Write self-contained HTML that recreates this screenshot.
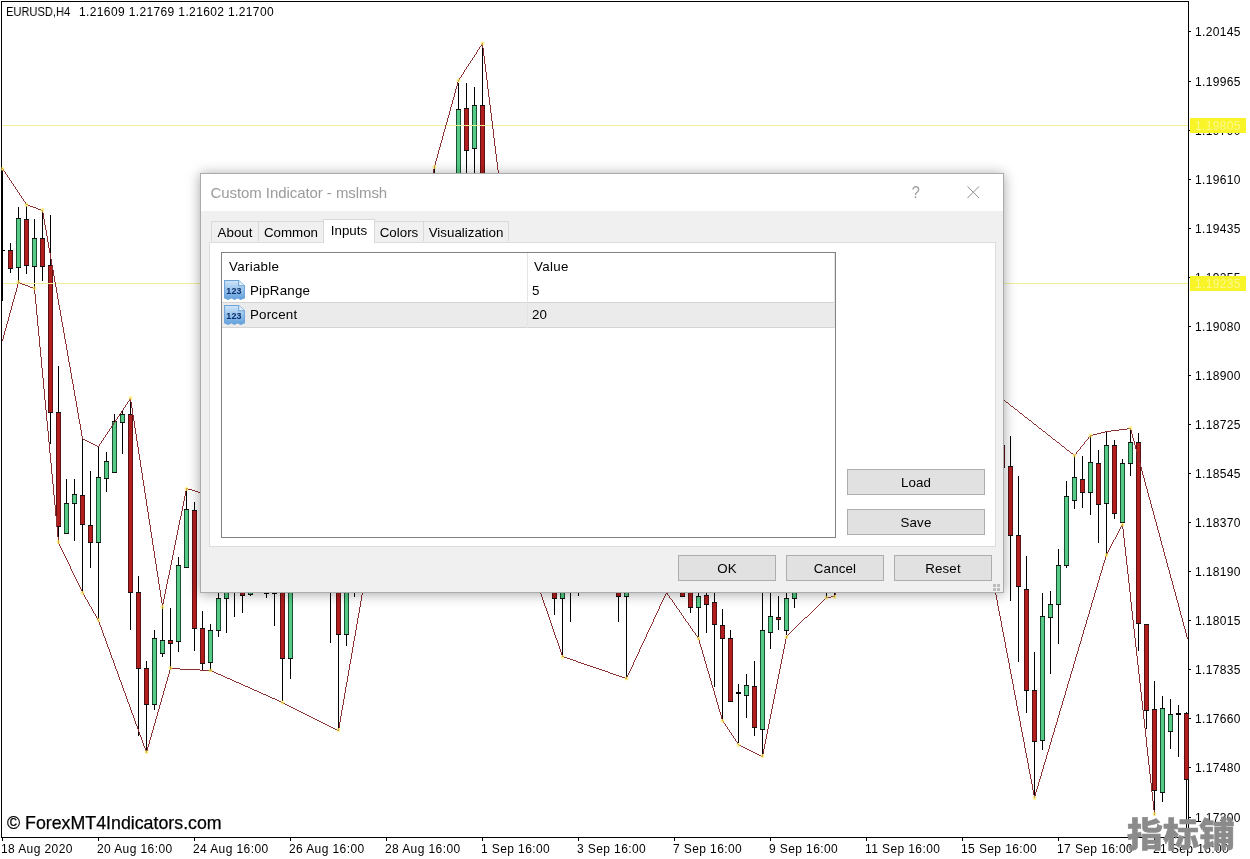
<!DOCTYPE html>
<html lang="en"><head><meta charset="utf-8"><title>EURUSD,H4 - Custom Indicator - mslmsh</title>
<style>
html,body{margin:0;padding:0;background:#fff;}
body{width:1250px;height:859px;position:relative;overflow:hidden;font-family:"Liberation Sans",sans-serif;color:#000;}
.chart{position:absolute;left:0;top:0;}
.ct,.pl,.dl,.wm,.dlg,.yb{will-change:transform;}
.ct{position:absolute;font-size:12px;line-height:14px;white-space:pre;letter-spacing:0.25px;}
.pl{position:absolute;left:1195px;width:52px;height:14px;font-size:12px;line-height:14px;letter-spacing:0.36px;white-space:pre;}
.yb{position:absolute;left:1190px;width:56px;height:15px;background:#f8f428;font-size:12px;line-height:15px;letter-spacing:0.36px;color:#fbf98c;white-space:pre;}
.yb span{position:absolute;left:5px;top:0.5px;}
.dl{position:absolute;top:842px;font-size:12px;line-height:14px;white-space:pre;letter-spacing:0.4px;}
.wm{position:absolute;left:7px;top:812.5px;-webkit-text-stroke:0.25px #000;font-size:17.8px;line-height:20px;white-space:pre;}
.cjk{position:absolute;left:1127px;top:813px;font-family:"Liberation Sans","Noto Sans CJK SC",sans-serif;font-weight:900;font-size:36px;line-height:46px;color:#8b8b8b;white-space:pre;-webkit-text-stroke:0.5px #8b8b8b;transform:scaleY(0.94);transform-origin:0 50%;}
.dlg{position:absolute;left:200px;top:173px;width:802px;height:418px;border:1px solid #ababab;background:#f0f0f0;box-shadow:0 1px 12px rgba(0,0,0,0.36);font-size:13.33px;}
.dlg .tb{position:absolute;left:0;top:0;width:802px;height:37px;background:#fff;}
.dlg .tt{position:absolute;left:9.5px;top:10px;font-size:15px;line-height:18px;color:#9b9b9b;white-space:pre;letter-spacing:-0.07px;}
.dlg .q{position:absolute;left:710px;top:10px;font-size:17px;line-height:18px;color:#9b9b9b;transform:scaleX(0.85);}
.dlg .x{position:absolute;left:766px;top:12px;}
.tab{position:absolute;top:47px;height:20px;border:1px solid #d9d9d9;border-bottom:none;background:#f0f0f0;box-sizing:border-box;text-align:center;line-height:21px;white-space:pre;}
.tab.sel{top:45px;height:24px;background:#fff;line-height:22px;z-index:2;}
.page{position:absolute;left:8px;top:68px;width:785px;height:303px;border:1px solid #dcdcdc;background:#fff;}
.list{position:absolute;left:11px;top:9px;width:613px;height:284px;border:1px solid #828282;background:#fff;}
.list .hd{position:absolute;top:0;height:25px;line-height:28px;letter-spacing:0.3px;}
.row{position:absolute;left:0;width:612px;height:24px;line-height:25px;letter-spacing:0.2px;}
.row.sel{background:#ebebeb;border-top:1px solid #d4d4d4;border-bottom:1px solid #d4d4d4;height:24px;line-height:24px;}
.vd{position:absolute;left:305px;top:0;width:1px;height:75px;background:#e5e5e5;}
.vd2{position:absolute;left:612px;top:0;width:1px;height:75px;background:#e5e5e5;}
.btn{position:absolute;height:24px;border:1px solid #adadad;background:#e1e1e1;text-align:center;line-height:25px;letter-spacing:0.15px;box-sizing:content-box;}
.ico{position:absolute;left:1px;}
</style></head>
<body>
<svg class="chart" width="1250" height="859" viewBox="0 0 1250 859"><g shape-rendering="crispEdges"><rect x="1" y="1" width="1188" height="1" fill="#000"/><rect x="1" y="1" width="1" height="837" fill="#000"/><rect x="1188" y="1" width="1" height="837" fill="#000"/><rect x="1" y="837" width="1188" height="1" fill="#000"/><rect x="2" y="170" width="1" height="131" fill="#000"/><rect x="2" y="250" width="3" height="1" fill="#000"/><rect x="10" y="243" width="1" height="30" fill="#000"/><rect x="8" y="250" width="5" height="19" fill="#5c1212"/><rect x="8" y="250" width="5" height="1" fill="#111"/><rect x="8" y="268" width="5" height="1" fill="#111"/><rect x="9" y="251" width="3" height="17" fill="#b01e1e"/><rect x="18" y="207" width="1" height="75" fill="#000"/><rect x="16" y="218" width="5" height="50" fill="#1a4f31"/><rect x="16" y="218" width="5" height="1" fill="#111"/><rect x="16" y="267" width="5" height="1" fill="#111"/><rect x="17" y="219" width="3" height="48" fill="#55cb87"/><rect x="26" y="206" width="1" height="68" fill="#000"/><rect x="24" y="219" width="5" height="47" fill="#5c1212"/><rect x="24" y="219" width="5" height="1" fill="#111"/><rect x="24" y="265" width="5" height="1" fill="#111"/><rect x="25" y="220" width="3" height="45" fill="#b01e1e"/><rect x="34" y="219" width="1" height="69" fill="#000"/><rect x="32" y="238" width="5" height="29" fill="#1a4f31"/><rect x="32" y="238" width="5" height="1" fill="#111"/><rect x="32" y="266" width="5" height="1" fill="#111"/><rect x="33" y="239" width="3" height="27" fill="#55cb87"/><rect x="42" y="212" width="1" height="69" fill="#000"/><rect x="40" y="238" width="5" height="29" fill="#5c1212"/><rect x="40" y="238" width="5" height="1" fill="#111"/><rect x="40" y="266" width="5" height="1" fill="#111"/><rect x="41" y="239" width="3" height="27" fill="#b01e1e"/><rect x="50" y="215" width="1" height="229" fill="#000"/><rect x="48" y="265" width="5" height="148" fill="#5c1212"/><rect x="48" y="265" width="5" height="1" fill="#111"/><rect x="48" y="412" width="5" height="1" fill="#111"/><rect x="49" y="266" width="3" height="146" fill="#b01e1e"/><rect x="58" y="366" width="1" height="171" fill="#000"/><rect x="56" y="412" width="5" height="115" fill="#5c1212"/><rect x="56" y="412" width="5" height="1" fill="#111"/><rect x="56" y="526" width="5" height="1" fill="#111"/><rect x="57" y="413" width="3" height="113" fill="#b01e1e"/><rect x="66" y="479" width="1" height="54" fill="#000"/><rect x="64" y="503" width="5" height="31" fill="#1a4f31"/><rect x="64" y="503" width="5" height="1" fill="#111"/><rect x="64" y="533" width="5" height="1" fill="#111"/><rect x="65" y="504" width="3" height="29" fill="#55cb87"/><rect x="74" y="479" width="1" height="62" fill="#000"/><rect x="72" y="494" width="5" height="10" fill="#1a4f31"/><rect x="72" y="494" width="5" height="1" fill="#111"/><rect x="72" y="503" width="5" height="1" fill="#111"/><rect x="73" y="495" width="3" height="8" fill="#55cb87"/><rect x="82" y="438" width="1" height="153" fill="#000"/><rect x="80" y="495" width="5" height="30" fill="#5c1212"/><rect x="80" y="495" width="5" height="1" fill="#111"/><rect x="80" y="524" width="5" height="1" fill="#111"/><rect x="81" y="496" width="3" height="28" fill="#b01e1e"/><rect x="90" y="471" width="1" height="97" fill="#000"/><rect x="88" y="525" width="5" height="18" fill="#5c1212"/><rect x="88" y="525" width="5" height="1" fill="#111"/><rect x="88" y="542" width="5" height="1" fill="#111"/><rect x="89" y="526" width="3" height="16" fill="#b01e1e"/><rect x="98" y="447" width="1" height="172" fill="#000"/><rect x="96" y="477" width="5" height="66" fill="#1a4f31"/><rect x="96" y="477" width="5" height="1" fill="#111"/><rect x="96" y="542" width="5" height="1" fill="#111"/><rect x="97" y="478" width="3" height="64" fill="#55cb87"/><rect x="106" y="452" width="1" height="40" fill="#000"/><rect x="104" y="461" width="5" height="18" fill="#1a4f31"/><rect x="104" y="461" width="5" height="1" fill="#111"/><rect x="104" y="478" width="5" height="1" fill="#111"/><rect x="105" y="462" width="3" height="16" fill="#55cb87"/><rect x="114" y="414" width="1" height="58" fill="#000"/><rect x="112" y="421" width="5" height="52" fill="#1a4f31"/><rect x="112" y="421" width="5" height="1" fill="#111"/><rect x="112" y="472" width="5" height="1" fill="#111"/><rect x="113" y="422" width="3" height="50" fill="#55cb87"/><rect x="122" y="411" width="1" height="43" fill="#000"/><rect x="120" y="414" width="5" height="9" fill="#1a4f31"/><rect x="120" y="414" width="5" height="1" fill="#111"/><rect x="120" y="422" width="5" height="1" fill="#111"/><rect x="121" y="415" width="3" height="7" fill="#55cb87"/><rect x="130" y="398" width="1" height="232" fill="#000"/><rect x="128" y="414" width="5" height="179" fill="#5c1212"/><rect x="128" y="414" width="5" height="1" fill="#111"/><rect x="128" y="592" width="5" height="1" fill="#111"/><rect x="129" y="415" width="3" height="177" fill="#b01e1e"/><rect x="138" y="576" width="1" height="160" fill="#000"/><rect x="136" y="592" width="5" height="77" fill="#5c1212"/><rect x="136" y="592" width="5" height="1" fill="#111"/><rect x="136" y="668" width="5" height="1" fill="#111"/><rect x="137" y="593" width="3" height="75" fill="#b01e1e"/><rect x="146" y="661" width="1" height="90" fill="#000"/><rect x="144" y="668" width="5" height="37" fill="#5c1212"/><rect x="144" y="668" width="5" height="1" fill="#111"/><rect x="144" y="704" width="5" height="1" fill="#111"/><rect x="145" y="669" width="3" height="35" fill="#b01e1e"/><rect x="154" y="630" width="1" height="80" fill="#000"/><rect x="152" y="638" width="5" height="67" fill="#1a4f31"/><rect x="152" y="638" width="5" height="1" fill="#111"/><rect x="152" y="704" width="5" height="1" fill="#111"/><rect x="153" y="639" width="3" height="65" fill="#55cb87"/><rect x="162" y="607" width="1" height="50" fill="#000"/><rect x="160" y="640" width="5" height="14" fill="#1a4f31"/><rect x="160" y="640" width="5" height="1" fill="#111"/><rect x="160" y="653" width="5" height="1" fill="#111"/><rect x="161" y="641" width="3" height="12" fill="#55cb87"/><rect x="170" y="608" width="1" height="60" fill="#000"/><rect x="168" y="640" width="5" height="4" fill="#5c1212"/><rect x="168" y="640" width="5" height="1" fill="#111"/><rect x="168" y="643" width="5" height="1" fill="#111"/><rect x="169" y="641" width="3" height="2" fill="#b01e1e"/><rect x="178" y="557" width="1" height="95" fill="#000"/><rect x="176" y="565" width="5" height="77" fill="#1a4f31"/><rect x="176" y="565" width="5" height="1" fill="#111"/><rect x="176" y="641" width="5" height="1" fill="#111"/><rect x="177" y="566" width="3" height="75" fill="#55cb87"/><rect x="186" y="489" width="1" height="79" fill="#000"/><rect x="184" y="509" width="5" height="59" fill="#1a4f31"/><rect x="184" y="509" width="5" height="1" fill="#111"/><rect x="184" y="567" width="5" height="1" fill="#111"/><rect x="185" y="510" width="3" height="57" fill="#55cb87"/><rect x="194" y="502" width="1" height="149" fill="#000"/><rect x="192" y="510" width="5" height="119" fill="#5c1212"/><rect x="192" y="510" width="5" height="1" fill="#111"/><rect x="192" y="628" width="5" height="1" fill="#111"/><rect x="193" y="511" width="3" height="117" fill="#b01e1e"/><rect x="202" y="611" width="1" height="59" fill="#000"/><rect x="200" y="628" width="5" height="36" fill="#5c1212"/><rect x="200" y="628" width="5" height="1" fill="#111"/><rect x="200" y="663" width="5" height="1" fill="#111"/><rect x="201" y="629" width="3" height="34" fill="#b01e1e"/><rect x="210" y="624" width="1" height="46" fill="#000"/><rect x="208" y="630" width="5" height="33" fill="#1a4f31"/><rect x="208" y="630" width="5" height="1" fill="#111"/><rect x="208" y="662" width="5" height="1" fill="#111"/><rect x="209" y="631" width="3" height="31" fill="#55cb87"/><rect x="218" y="570" width="1" height="67" fill="#000"/><rect x="216" y="598" width="5" height="33" fill="#1a4f31"/><rect x="216" y="598" width="5" height="1" fill="#111"/><rect x="216" y="630" width="5" height="1" fill="#111"/><rect x="217" y="599" width="3" height="31" fill="#55cb87"/><rect x="226" y="550" width="1" height="83" fill="#000"/><rect x="224" y="560" width="5" height="39" fill="#1a4f31"/><rect x="224" y="560" width="5" height="1" fill="#111"/><rect x="224" y="598" width="5" height="1" fill="#111"/><rect x="225" y="561" width="3" height="37" fill="#55cb87"/><rect x="234" y="560" width="1" height="57" fill="#000"/><rect x="232" y="570" width="5" height="11" fill="#5c1212"/><rect x="232" y="570" width="5" height="1" fill="#111"/><rect x="232" y="580" width="5" height="1" fill="#111"/><rect x="233" y="571" width="3" height="9" fill="#b01e1e"/><rect x="242" y="570" width="1" height="43" fill="#000"/><rect x="240" y="580" width="5" height="16" fill="#5c1212"/><rect x="240" y="580" width="5" height="1" fill="#111"/><rect x="240" y="595" width="5" height="1" fill="#111"/><rect x="241" y="581" width="3" height="14" fill="#b01e1e"/><rect x="250" y="575" width="1" height="21" fill="#000"/><rect x="248" y="580" width="5" height="15" fill="#1a4f31"/><rect x="248" y="580" width="5" height="1" fill="#111"/><rect x="248" y="594" width="5" height="1" fill="#111"/><rect x="249" y="581" width="3" height="13" fill="#55cb87"/><rect x="266" y="580" width="1" height="18" fill="#000"/><rect x="264" y="592" width="5" height="2" fill="#000"/><rect x="274" y="580" width="1" height="46" fill="#000"/><rect x="272" y="592" width="5" height="2" fill="#000"/><rect x="282" y="570" width="1" height="131" fill="#000"/><rect x="280" y="580" width="5" height="79" fill="#5c1212"/><rect x="280" y="580" width="5" height="1" fill="#111"/><rect x="280" y="658" width="5" height="1" fill="#111"/><rect x="281" y="581" width="3" height="77" fill="#b01e1e"/><rect x="290" y="570" width="1" height="109" fill="#000"/><rect x="288" y="580" width="5" height="79" fill="#1a4f31"/><rect x="288" y="580" width="5" height="1" fill="#111"/><rect x="288" y="658" width="5" height="1" fill="#111"/><rect x="289" y="581" width="3" height="77" fill="#55cb87"/><rect x="330" y="570" width="1" height="73" fill="#000"/><rect x="328" y="580" width="5" height="6" fill="#5c1212"/><rect x="328" y="580" width="5" height="1" fill="#111"/><rect x="328" y="585" width="5" height="1" fill="#111"/><rect x="329" y="581" width="3" height="4" fill="#b01e1e"/><rect x="338" y="570" width="1" height="158" fill="#000"/><rect x="336" y="580" width="5" height="55" fill="#5c1212"/><rect x="336" y="580" width="5" height="1" fill="#111"/><rect x="336" y="634" width="5" height="1" fill="#111"/><rect x="337" y="581" width="3" height="53" fill="#b01e1e"/><rect x="346" y="570" width="1" height="76" fill="#000"/><rect x="344" y="580" width="5" height="55" fill="#1a4f31"/><rect x="344" y="580" width="5" height="1" fill="#111"/><rect x="344" y="634" width="5" height="1" fill="#111"/><rect x="345" y="581" width="3" height="53" fill="#55cb87"/><rect x="354" y="570" width="1" height="27" fill="#000"/><rect x="352" y="580" width="5" height="6" fill="#1a4f31"/><rect x="352" y="580" width="5" height="1" fill="#111"/><rect x="352" y="585" width="5" height="1" fill="#111"/><rect x="353" y="581" width="3" height="4" fill="#55cb87"/><rect x="434" y="168" width="1" height="32" fill="#000"/><rect x="432" y="180" width="5" height="11" fill="#1a4f31"/><rect x="432" y="180" width="5" height="1" fill="#111"/><rect x="432" y="190" width="5" height="1" fill="#111"/><rect x="433" y="181" width="3" height="9" fill="#55cb87"/><rect x="458" y="83" width="1" height="107" fill="#000"/><rect x="456" y="109" width="5" height="72" fill="#1a4f31"/><rect x="456" y="109" width="5" height="1" fill="#111"/><rect x="456" y="180" width="5" height="1" fill="#111"/><rect x="457" y="110" width="3" height="70" fill="#55cb87"/><rect x="466" y="83" width="1" height="107" fill="#000"/><rect x="464" y="108" width="5" height="43" fill="#5c1212"/><rect x="464" y="108" width="5" height="1" fill="#111"/><rect x="464" y="150" width="5" height="1" fill="#111"/><rect x="465" y="109" width="3" height="41" fill="#b01e1e"/><rect x="474" y="87" width="1" height="103" fill="#000"/><rect x="472" y="105" width="5" height="44" fill="#1a4f31"/><rect x="472" y="105" width="5" height="1" fill="#111"/><rect x="472" y="148" width="5" height="1" fill="#111"/><rect x="473" y="106" width="3" height="42" fill="#55cb87"/><rect x="482" y="46" width="1" height="149" fill="#000"/><rect x="480" y="105" width="5" height="86" fill="#5c1212"/><rect x="480" y="105" width="5" height="1" fill="#111"/><rect x="480" y="190" width="5" height="1" fill="#111"/><rect x="481" y="106" width="3" height="84" fill="#b01e1e"/><rect x="554" y="570" width="1" height="45" fill="#000"/><rect x="552" y="580" width="5" height="19" fill="#5c1212"/><rect x="552" y="580" width="5" height="1" fill="#111"/><rect x="552" y="598" width="5" height="1" fill="#111"/><rect x="553" y="581" width="3" height="17" fill="#b01e1e"/><rect x="562" y="570" width="1" height="85" fill="#000"/><rect x="560" y="580" width="5" height="19" fill="#1a4f31"/><rect x="560" y="580" width="5" height="1" fill="#111"/><rect x="560" y="598" width="5" height="1" fill="#111"/><rect x="561" y="581" width="3" height="17" fill="#55cb87"/><rect x="570" y="570" width="1" height="52" fill="#000"/><rect x="568" y="575" width="5" height="6" fill="#5c1212"/><rect x="568" y="575" width="5" height="1" fill="#111"/><rect x="568" y="580" width="5" height="1" fill="#111"/><rect x="569" y="576" width="3" height="4" fill="#b01e1e"/><rect x="578" y="570" width="1" height="26" fill="#000"/><rect x="576" y="575" width="5" height="6" fill="#5c1212"/><rect x="576" y="575" width="5" height="1" fill="#111"/><rect x="576" y="580" width="5" height="1" fill="#111"/><rect x="577" y="576" width="3" height="4" fill="#b01e1e"/><rect x="618" y="570" width="1" height="52" fill="#000"/><rect x="616" y="580" width="5" height="17" fill="#5c1212"/><rect x="616" y="580" width="5" height="1" fill="#111"/><rect x="616" y="596" width="5" height="1" fill="#111"/><rect x="617" y="581" width="3" height="15" fill="#b01e1e"/><rect x="626" y="570" width="1" height="107" fill="#000"/><rect x="624" y="580" width="5" height="17" fill="#1a4f31"/><rect x="624" y="580" width="5" height="1" fill="#111"/><rect x="624" y="596" width="5" height="1" fill="#111"/><rect x="625" y="581" width="3" height="15" fill="#55cb87"/><rect x="682" y="570" width="1" height="26" fill="#000"/><rect x="680" y="580" width="5" height="17" fill="#5c1212"/><rect x="680" y="580" width="5" height="1" fill="#111"/><rect x="680" y="596" width="5" height="1" fill="#111"/><rect x="681" y="581" width="3" height="15" fill="#b01e1e"/><rect x="690" y="570" width="1" height="43" fill="#000"/><rect x="688" y="580" width="5" height="28" fill="#5c1212"/><rect x="688" y="580" width="5" height="1" fill="#111"/><rect x="688" y="607" width="5" height="1" fill="#111"/><rect x="689" y="581" width="3" height="26" fill="#b01e1e"/><rect x="698" y="570" width="1" height="67" fill="#000"/><rect x="696" y="596" width="5" height="12" fill="#1a4f31"/><rect x="696" y="596" width="5" height="1" fill="#111"/><rect x="696" y="607" width="5" height="1" fill="#111"/><rect x="697" y="597" width="3" height="10" fill="#55cb87"/><rect x="706" y="570" width="1" height="63" fill="#000"/><rect x="704" y="595" width="5" height="10" fill="#5c1212"/><rect x="704" y="595" width="5" height="1" fill="#111"/><rect x="704" y="604" width="5" height="1" fill="#111"/><rect x="705" y="596" width="3" height="8" fill="#b01e1e"/><rect x="714" y="570" width="1" height="117" fill="#000"/><rect x="712" y="602" width="5" height="23" fill="#5c1212"/><rect x="712" y="602" width="5" height="1" fill="#111"/><rect x="712" y="624" width="5" height="1" fill="#111"/><rect x="713" y="603" width="3" height="21" fill="#b01e1e"/><rect x="722" y="609" width="1" height="110" fill="#000"/><rect x="720" y="625" width="5" height="14" fill="#5c1212"/><rect x="720" y="625" width="5" height="1" fill="#111"/><rect x="720" y="638" width="5" height="1" fill="#111"/><rect x="721" y="626" width="3" height="12" fill="#b01e1e"/><rect x="730" y="630" width="1" height="71" fill="#000"/><rect x="728" y="638" width="5" height="64" fill="#5c1212"/><rect x="728" y="638" width="5" height="1" fill="#111"/><rect x="728" y="701" width="5" height="1" fill="#111"/><rect x="729" y="639" width="3" height="62" fill="#b01e1e"/><rect x="738" y="684" width="1" height="59" fill="#000"/><rect x="736" y="692" width="5" height="2" fill="#000"/><rect x="746" y="674" width="1" height="44" fill="#000"/><rect x="744" y="685" width="5" height="11" fill="#1a4f31"/><rect x="744" y="685" width="5" height="1" fill="#111"/><rect x="744" y="695" width="5" height="1" fill="#111"/><rect x="745" y="686" width="3" height="9" fill="#55cb87"/><rect x="754" y="661" width="1" height="75" fill="#000"/><rect x="752" y="686" width="5" height="42" fill="#5c1212"/><rect x="752" y="686" width="5" height="1" fill="#111"/><rect x="752" y="727" width="5" height="1" fill="#111"/><rect x="753" y="687" width="3" height="40" fill="#b01e1e"/><rect x="762" y="570" width="1" height="184" fill="#000"/><rect x="760" y="630" width="5" height="100" fill="#1a4f31"/><rect x="760" y="630" width="5" height="1" fill="#111"/><rect x="760" y="729" width="5" height="1" fill="#111"/><rect x="761" y="631" width="3" height="98" fill="#55cb87"/><rect x="770" y="570" width="1" height="79" fill="#000"/><rect x="768" y="616" width="5" height="17" fill="#1a4f31"/><rect x="768" y="616" width="5" height="1" fill="#111"/><rect x="768" y="632" width="5" height="1" fill="#111"/><rect x="769" y="617" width="3" height="15" fill="#55cb87"/><rect x="778" y="596" width="1" height="34" fill="#000"/><rect x="776" y="617" width="5" height="3" fill="#5c1212"/><rect x="776" y="617" width="5" height="1" fill="#111"/><rect x="776" y="619" width="5" height="1" fill="#111"/><rect x="777" y="618" width="3" height="1" fill="#b01e1e"/><rect x="786" y="593" width="1" height="42" fill="#000"/><rect x="784" y="598" width="5" height="33" fill="#1a4f31"/><rect x="784" y="598" width="5" height="1" fill="#111"/><rect x="784" y="630" width="5" height="1" fill="#111"/><rect x="785" y="599" width="3" height="31" fill="#55cb87"/><rect x="794" y="570" width="1" height="38" fill="#000"/><rect x="792" y="580" width="5" height="19" fill="#1a4f31"/><rect x="792" y="580" width="5" height="1" fill="#111"/><rect x="792" y="598" width="5" height="1" fill="#111"/><rect x="793" y="581" width="3" height="17" fill="#55cb87"/><rect x="826" y="570" width="1" height="27" fill="#000"/><rect x="824" y="575" width="5" height="6" fill="#1a4f31"/><rect x="824" y="575" width="5" height="1" fill="#111"/><rect x="824" y="580" width="5" height="1" fill="#111"/><rect x="825" y="576" width="3" height="4" fill="#55cb87"/><rect x="834" y="570" width="1" height="27" fill="#000"/><rect x="832" y="575" width="5" height="6" fill="#1a4f31"/><rect x="832" y="575" width="5" height="1" fill="#111"/><rect x="832" y="580" width="5" height="1" fill="#111"/><rect x="833" y="576" width="3" height="4" fill="#55cb87"/><rect x="1002" y="440" width="1" height="30" fill="#000"/><rect x="1000" y="445" width="5" height="23" fill="#5c1212"/><rect x="1000" y="445" width="5" height="1" fill="#111"/><rect x="1000" y="467" width="5" height="1" fill="#111"/><rect x="1001" y="446" width="3" height="21" fill="#b01e1e"/><rect x="1010" y="436" width="1" height="165" fill="#000"/><rect x="1008" y="466" width="5" height="70" fill="#5c1212"/><rect x="1008" y="466" width="5" height="1" fill="#111"/><rect x="1008" y="535" width="5" height="1" fill="#111"/><rect x="1009" y="467" width="3" height="68" fill="#b01e1e"/><rect x="1018" y="476" width="1" height="186" fill="#000"/><rect x="1016" y="535" width="5" height="52" fill="#5c1212"/><rect x="1016" y="535" width="5" height="1" fill="#111"/><rect x="1016" y="586" width="5" height="1" fill="#111"/><rect x="1017" y="536" width="3" height="50" fill="#b01e1e"/><rect x="1026" y="556" width="1" height="157" fill="#000"/><rect x="1024" y="589" width="5" height="102" fill="#5c1212"/><rect x="1024" y="589" width="5" height="1" fill="#111"/><rect x="1024" y="690" width="5" height="1" fill="#111"/><rect x="1025" y="590" width="3" height="100" fill="#b01e1e"/><rect x="1034" y="652" width="1" height="144" fill="#000"/><rect x="1032" y="690" width="5" height="52" fill="#5c1212"/><rect x="1032" y="690" width="5" height="1" fill="#111"/><rect x="1032" y="741" width="5" height="1" fill="#111"/><rect x="1033" y="691" width="3" height="50" fill="#b01e1e"/><rect x="1042" y="593" width="1" height="157" fill="#000"/><rect x="1040" y="616" width="5" height="125" fill="#1a4f31"/><rect x="1040" y="616" width="5" height="1" fill="#111"/><rect x="1040" y="740" width="5" height="1" fill="#111"/><rect x="1041" y="617" width="3" height="123" fill="#55cb87"/><rect x="1050" y="591" width="1" height="83" fill="#000"/><rect x="1048" y="604" width="5" height="14" fill="#1a4f31"/><rect x="1048" y="604" width="5" height="1" fill="#111"/><rect x="1048" y="617" width="5" height="1" fill="#111"/><rect x="1049" y="605" width="3" height="12" fill="#55cb87"/><rect x="1058" y="549" width="1" height="95" fill="#000"/><rect x="1056" y="565" width="5" height="40" fill="#1a4f31"/><rect x="1056" y="565" width="5" height="1" fill="#111"/><rect x="1056" y="604" width="5" height="1" fill="#111"/><rect x="1057" y="566" width="3" height="38" fill="#55cb87"/><rect x="1066" y="481" width="1" height="87" fill="#000"/><rect x="1064" y="496" width="5" height="70" fill="#1a4f31"/><rect x="1064" y="496" width="5" height="1" fill="#111"/><rect x="1064" y="565" width="5" height="1" fill="#111"/><rect x="1065" y="497" width="3" height="68" fill="#55cb87"/><rect x="1074" y="455" width="1" height="54" fill="#000"/><rect x="1072" y="477" width="5" height="24" fill="#1a4f31"/><rect x="1072" y="477" width="5" height="1" fill="#111"/><rect x="1072" y="500" width="5" height="1" fill="#111"/><rect x="1073" y="478" width="3" height="22" fill="#55cb87"/><rect x="1082" y="456" width="1" height="52" fill="#000"/><rect x="1080" y="479" width="5" height="14" fill="#5c1212"/><rect x="1080" y="479" width="5" height="1" fill="#111"/><rect x="1080" y="492" width="5" height="1" fill="#111"/><rect x="1081" y="480" width="3" height="12" fill="#b01e1e"/><rect x="1090" y="436" width="1" height="79" fill="#000"/><rect x="1088" y="462" width="5" height="31" fill="#1a4f31"/><rect x="1088" y="462" width="5" height="1" fill="#111"/><rect x="1088" y="492" width="5" height="1" fill="#111"/><rect x="1089" y="463" width="3" height="29" fill="#55cb87"/><rect x="1098" y="450" width="1" height="93" fill="#000"/><rect x="1096" y="463" width="5" height="42" fill="#5c1212"/><rect x="1096" y="463" width="5" height="1" fill="#111"/><rect x="1096" y="504" width="5" height="1" fill="#111"/><rect x="1097" y="464" width="3" height="40" fill="#b01e1e"/><rect x="1106" y="432" width="1" height="122" fill="#000"/><rect x="1104" y="445" width="5" height="59" fill="#1a4f31"/><rect x="1104" y="445" width="5" height="1" fill="#111"/><rect x="1104" y="503" width="5" height="1" fill="#111"/><rect x="1105" y="446" width="3" height="57" fill="#55cb87"/><rect x="1114" y="440" width="1" height="79" fill="#000"/><rect x="1112" y="445" width="5" height="69" fill="#5c1212"/><rect x="1112" y="445" width="5" height="1" fill="#111"/><rect x="1112" y="513" width="5" height="1" fill="#111"/><rect x="1113" y="446" width="3" height="67" fill="#b01e1e"/><rect x="1122" y="459" width="1" height="64" fill="#000"/><rect x="1120" y="463" width="5" height="60" fill="#1a4f31"/><rect x="1120" y="463" width="5" height="1" fill="#111"/><rect x="1120" y="522" width="5" height="1" fill="#111"/><rect x="1121" y="464" width="3" height="58" fill="#55cb87"/><rect x="1130" y="429" width="1" height="47" fill="#000"/><rect x="1128" y="442" width="5" height="22" fill="#1a4f31"/><rect x="1128" y="442" width="5" height="1" fill="#111"/><rect x="1128" y="463" width="5" height="1" fill="#111"/><rect x="1129" y="443" width="3" height="20" fill="#55cb87"/><rect x="1138" y="433" width="1" height="218" fill="#000"/><rect x="1136" y="442" width="5" height="182" fill="#5c1212"/><rect x="1136" y="442" width="5" height="1" fill="#111"/><rect x="1136" y="623" width="5" height="1" fill="#111"/><rect x="1137" y="443" width="3" height="180" fill="#b01e1e"/><rect x="1146" y="624" width="1" height="105" fill="#000"/><rect x="1144" y="624" width="5" height="87" fill="#5c1212"/><rect x="1144" y="624" width="5" height="1" fill="#111"/><rect x="1144" y="710" width="5" height="1" fill="#111"/><rect x="1145" y="625" width="3" height="85" fill="#b01e1e"/><rect x="1154" y="681" width="1" height="130" fill="#000"/><rect x="1152" y="709" width="5" height="82" fill="#5c1212"/><rect x="1152" y="709" width="5" height="1" fill="#111"/><rect x="1152" y="790" width="5" height="1" fill="#111"/><rect x="1153" y="710" width="3" height="80" fill="#b01e1e"/><rect x="1162" y="696" width="1" height="106" fill="#000"/><rect x="1160" y="708" width="5" height="85" fill="#1a4f31"/><rect x="1160" y="708" width="5" height="1" fill="#111"/><rect x="1160" y="792" width="5" height="1" fill="#111"/><rect x="1161" y="709" width="3" height="83" fill="#55cb87"/><rect x="1170" y="699" width="1" height="50" fill="#000"/><rect x="1168" y="714" width="5" height="18" fill="#1a4f31"/><rect x="1168" y="714" width="5" height="1" fill="#111"/><rect x="1168" y="731" width="5" height="1" fill="#111"/><rect x="1169" y="715" width="3" height="16" fill="#55cb87"/><rect x="1178" y="705" width="1" height="52" fill="#000"/><rect x="1176" y="713" width="5" height="2" fill="#000"/><rect x="1186" y="712" width="1" height="123" fill="#000"/><rect x="1184" y="713" width="5" height="67" fill="#5c1212"/><rect x="1184" y="713" width="5" height="1" fill="#111"/><rect x="1184" y="779" width="5" height="1" fill="#111"/><rect x="1185" y="714" width="3" height="65" fill="#b01e1e"/><rect x="1189" y="31" width="2" height="1" fill="#000"/><rect x="1189" y="81" width="2" height="1" fill="#000"/><rect x="1189" y="130" width="2" height="1" fill="#000"/><rect x="1189" y="179" width="2" height="1" fill="#000"/><rect x="1189" y="228" width="2" height="1" fill="#000"/><rect x="1189" y="277" width="2" height="1" fill="#000"/><rect x="1189" y="326" width="2" height="1" fill="#000"/><rect x="1189" y="375" width="2" height="1" fill="#000"/><rect x="1189" y="424" width="2" height="1" fill="#000"/><rect x="1189" y="473" width="2" height="1" fill="#000"/><rect x="1189" y="522" width="2" height="1" fill="#000"/><rect x="1189" y="571" width="2" height="1" fill="#000"/><rect x="1189" y="620" width="2" height="1" fill="#000"/><rect x="1189" y="669" width="2" height="1" fill="#000"/><rect x="1189" y="718" width="2" height="1" fill="#000"/><rect x="1189" y="767" width="2" height="1" fill="#000"/><rect x="1189" y="817" width="2" height="1" fill="#000"/><rect x="2" y="838" width="1" height="3" fill="#000"/><rect x="98" y="838" width="1" height="3" fill="#000"/><rect x="194" y="838" width="1" height="3" fill="#000"/><rect x="290" y="838" width="1" height="3" fill="#000"/><rect x="386" y="838" width="1" height="3" fill="#000"/><rect x="482" y="838" width="1" height="3" fill="#000"/><rect x="578" y="838" width="1" height="3" fill="#000"/><rect x="674" y="838" width="1" height="3" fill="#000"/><rect x="770" y="838" width="1" height="3" fill="#000"/><rect x="866" y="838" width="1" height="3" fill="#000"/><rect x="962" y="838" width="1" height="3" fill="#000"/><rect x="1058" y="838" width="1" height="3" fill="#000"/><rect x="1154" y="838" width="1" height="3" fill="#000"/></g><g shape-rendering="crispEdges"><rect x="3" y="125" width="1185" height="1" fill="#f2ee98"/><rect x="3" y="283" width="1185" height="1" fill="#f2ee98"/></g><path d="M2.5 168v1M3.5 169v2M4.5 171v1M5.5 172v2M6.5 174v1M7.5 175v2M8.5 177v1M9.5 178v2M10.5 180v1M11.5 181v2M12.5 183v1M13.5 184v2M14.5 186v1M15.5 187v2M16.5 189v1M17.5 190v2M18.5 192v1M19.5 193v2M20.5 195v1M21.5 196v2M22.5 198v1M23.5 199v2M24.5 201v1M25.5 202v2M26.5 204v1M26 204.5h2M28 205.5h2M30 206.5h3M33 207.5h3M36 208.5h2M38 209.5h3M41 210.5h2M42.5 210v3M43.5 213v6M44.5 219v6M45.5 225v5M46.5 230v6M47.5 236v6M48.5 242v6M49.5 248v5M50.5 253v6M51.5 259v6M52.5 265v5M53.5 270v6M54.5 276v6M55.5 282v5M56.5 287v6M57.5 293v6M58.5 299v6M59.5 305v5M60.5 310v6M61.5 316v6M62.5 322v5M63.5 327v6M64.5 333v6M65.5 339v5M66.5 344v6M67.5 350v6M68.5 356v6M69.5 362v5M70.5 367v6M71.5 373v6M72.5 379v5M73.5 384v6M74.5 390v6M75.5 396v5M76.5 401v6M77.5 407v6M78.5 413v6M79.5 419v5M80.5 424v6M81.5 430v6M82.5 436v3M82 438.5h1M83 439.5h2M85 440.5h2M87 441.5h2M89 442.5h2M91 443.5h2M93 444.5h2M95 445.5h2M97 446.5h2M130.5 398v1M129.5 399v2M128.5 401v1M127.5 402v2M126.5 404v1M125.5 405v2M124.5 407v1M123.5 408v2M122.5 410v1M121.5 411v2M120.5 413v1M119.5 414v2M118.5 416v1M117.5 417v2M116.5 419v1M115.5 420v2M114.5 422v1M113.5 423v2M112.5 425v1M111.5 426v2M110.5 428v1M109.5 429v2M108.5 431v1M107.5 432v2M106.5 434v1M105.5 435v2M104.5 437v1M103.5 438v2M102.5 440v1M101.5 441v2M100.5 443v1M99.5 444v2M98.5 446v1M130.5 398v4M131.5 402v6M132.5 408v7M133.5 415v6M134.5 421v7M135.5 428v6M136.5 434v7M137.5 441v6M138.5 447v7M139.5 454v6M140.5 460v7M141.5 467v6M142.5 473v7M143.5 480v6M144.5 486v7M145.5 493v6M146.5 499v7M147.5 506v6M148.5 512v7M149.5 519v6M150.5 525v7M151.5 532v6M152.5 538v7M153.5 545v6M154.5 551v7M155.5 558v6M156.5 564v7M157.5 571v6M158.5 577v7M159.5 584v6M160.5 590v7M161.5 597v6M162.5 603v4M186.5 488v3M185.5 491v5M184.5 496v5M183.5 501v5M182.5 506v5M181.5 511v5M180.5 516v4M179.5 520v5M178.5 525v5M177.5 530v5M176.5 535v5M175.5 540v5M174.5 545v5M173.5 550v5M172.5 555v5M171.5 560v5M170.5 565v5M169.5 570v5M168.5 575v4M167.5 579v5M166.5 584v5M165.5 589v5M164.5 594v5M163.5 599v5M162.5 604v3M186 488.5h2M188 489.5h4M192 490.5h3M195 491.5h3M198 492.5h4M202 493.5h3M205 494.5h3M208 495.5h4M212 496.5h3M215 497.5h4M219 498.5h3M222 499.5h3M225 500.5h4M229 501.5h3M232 502.5h3M235 503.5h4M239 504.5h2M18.5 282v2M17.5 284v4M16.5 288v4M15.5 292v3M14.5 295v4M13.5 299v3M12.5 302v4M11.5 306v4M10.5 310v3M9.5 313v4M8.5 317v4M7.5 321v3M6.5 324v4M5.5 328v3M4.5 331v4M3.5 335v4M2.5 339v2M18 282.5h2M20 283.5h2M22 284.5h3M25 285.5h3M28 286.5h2M30 287.5h3M33 288.5h2M34.5 288v6M35.5 294v10M36.5 304v11M37.5 315v11M38.5 326v10M39.5 336v11M40.5 347v10M41.5 357v11M42.5 368v10M43.5 378v11M44.5 389v11M45.5 400v10M46.5 410v11M47.5 421v10M48.5 431v11M49.5 442v11M50.5 453v10M51.5 463v11M52.5 474v10M53.5 484v11M54.5 495v10M55.5 505v11M56.5 516v11M57.5 527v10M58.5 537v6M58.5 542v2M59.5 544v2M60.5 546v2M61.5 548v2M62.5 550v2M63.5 552v2M64.5 554v2M65.5 556v2M66.5 558v2M67.5 560v2M68.5 562v2M69.5 564v2M70.5 566v3M71.5 569v2M72.5 571v2M73.5 573v2M74.5 575v2M75.5 577v2M76.5 579v2M77.5 581v2M78.5 583v2M79.5 585v2M80.5 587v2M81.5 589v2M82.5 591v2M82.5 592v1M83.5 593v2M84.5 595v2M85.5 597v2M86.5 599v1M87.5 600v2M88.5 602v2M89.5 604v2M90.5 606v1M91.5 607v2M92.5 609v2M93.5 611v2M94.5 613v1M95.5 614v2M96.5 616v2M97.5 618v2M98.5 620v1M98.5 620v2M99.5 622v3M100.5 625v2M101.5 627v3M102.5 630v3M103.5 633v3M104.5 636v2M105.5 638v3M106.5 641v3M107.5 644v3M108.5 647v2M109.5 649v3M110.5 652v3M111.5 655v3M112.5 658v2M113.5 660v3M114.5 663v3M115.5 666v3M116.5 669v2M117.5 671v3M118.5 674v3M119.5 677v3M120.5 680v2M121.5 682v3M122.5 685v3M123.5 688v3M124.5 691v2M125.5 693v3M126.5 696v3M127.5 699v3M128.5 702v2M129.5 704v3M130.5 707v3M131.5 710v3M132.5 713v2M133.5 715v3M134.5 718v3M135.5 721v3M136.5 724v2M137.5 726v3M138.5 729v3M139.5 732v3M140.5 735v2M141.5 737v3M142.5 740v3M143.5 743v3M144.5 746v2M145.5 748v3M146.5 751v2M170.5 668v2M169.5 670v4M168.5 674v3M167.5 677v4M166.5 681v3M165.5 684v4M164.5 688v3M163.5 691v4M162.5 695v3M161.5 698v4M160.5 702v3M159.5 705v4M158.5 709v3M157.5 712v4M156.5 716v3M155.5 719v4M154.5 723v3M153.5 726v4M152.5 730v3M151.5 733v4M150.5 737v3M149.5 740v4M148.5 744v3M147.5 747v4M146.5 751v2M170 668.5h10M180 669.5h20M200 670.5h11M210 670.5h2M212 671.5h2M214 672.5h2M216 673.5h2M218 674.5h3M221 675.5h2M223 676.5h2M225 677.5h2M227 678.5h3M230 679.5h2M232 680.5h2M234 681.5h2M236 682.5h3M239 683.5h2M241 684.5h2M243 685.5h2M245 686.5h3M248 687.5h2M250 688.5h2M252 689.5h2M254 690.5h3M257 691.5h2M259 692.5h2M261 693.5h2M263 694.5h3M266 695.5h2M268 696.5h2M270 697.5h2M272 698.5h3M275 699.5h2M277 700.5h2M279 701.5h2M281 702.5h2M282 702.5h1M283 703.5h2M285 704.5h2M287 705.5h2M289 706.5h2M291 707.5h2M293 708.5h2M295 709.5h2M297 710.5h2M299 711.5h2M301 712.5h2M303 713.5h2M305 714.5h2M307 715.5h2M309 716.5h2M311 717.5h2M313 718.5h2M315 719.5h2M317 720.5h2M319 721.5h2M321 722.5h2M323 723.5h2M325 724.5h2M327 725.5h2M329 726.5h2M331 727.5h2M333 728.5h2M335 729.5h2M337 730.5h2M362.5 592v3M361.5 595v6M360.5 601v6M359.5 607v6M358.5 613v5M357.5 618v6M356.5 624v6M355.5 630v6M354.5 636v5M353.5 641v6M352.5 647v6M351.5 653v6M350.5 659v5M349.5 664v6M348.5 670v6M347.5 676v6M346.5 682v5M345.5 687v6M344.5 693v6M343.5 699v6M342.5 705v5M341.5 710v6M340.5 716v6M339.5 722v6M338.5 728v3M364.5 580v4M363.5 584v6M362.5 590v3M434.5 166v3M433.5 169v4M432.5 173v4M431.5 177v4M430.5 181v2M458.5 80v2M457.5 82v4M456.5 86v3M455.5 89v4M454.5 93v4M453.5 97v3M452.5 100v4M451.5 104v3M450.5 107v4M449.5 111v4M448.5 115v3M447.5 118v4M446.5 122v3M445.5 125v4M444.5 129v3M443.5 132v4M442.5 136v4M441.5 140v3M440.5 143v4M439.5 147v3M438.5 150v4M437.5 154v4M436.5 158v3M435.5 161v4M434.5 165v2M482.5 43v1M481.5 44v2M480.5 46v1M479.5 47v2M478.5 49v1M477.5 50v2M476.5 52v2M475.5 54v1M474.5 55v2M473.5 57v1M472.5 58v2M471.5 60v1M470.5 61v2M469.5 63v1M468.5 64v2M467.5 66v1M466.5 67v2M465.5 69v1M464.5 70v2M463.5 72v2M462.5 74v1M461.5 75v2M460.5 77v1M459.5 78v2M458.5 80v1M482.5 43v5M483.5 48v8M484.5 56v8M485.5 64v8M486.5 72v8M487.5 80v9M488.5 89v8M489.5 97v8M490.5 105v8M491.5 113v8M492.5 121v8M493.5 129v9M494.5 138v8M495.5 146v8M496.5 154v8M497.5 162v8M498.5 170v5M498.5 174v4M499.5 178v8M500.5 186v5M535.5 580v2M536.5 582v2M537.5 584v2M538.5 586v3M539.5 589v2M540.5 591v2M540.5 592v2M541.5 594v3M542.5 597v3M543.5 600v3M544.5 603v3M545.5 606v2M546.5 608v3M547.5 611v3M548.5 614v3M549.5 617v3M550.5 620v3M551.5 623v3M552.5 626v3M553.5 629v3M554.5 632v3M555.5 635v3M556.5 638v2M557.5 640v3M558.5 643v3M559.5 646v3M560.5 649v3M561.5 652v3M562.5 655v2M562 656.5h2M564 657.5h3M567 658.5h3M570 659.5h3M573 660.5h3M576 661.5h2M578 662.5h3M581 663.5h3M584 664.5h3M587 665.5h3M590 666.5h3M593 667.5h3M596 668.5h3M599 669.5h3M602 670.5h3M605 671.5h3M608 672.5h2M610 673.5h3M613 674.5h3M616 675.5h3M619 676.5h3M622 677.5h3M625 678.5h2M666.5 592v2M665.5 594v2M664.5 596v2M663.5 598v2M662.5 600v2M661.5 602v2M660.5 604v2M659.5 606v3M658.5 609v2M657.5 611v2M656.5 613v2M655.5 615v2M654.5 617v2M653.5 619v3M652.5 622v2M651.5 624v2M650.5 626v2M649.5 628v2M648.5 630v2M647.5 632v2M646.5 634v3M645.5 637v2M644.5 639v2M643.5 641v2M642.5 643v2M641.5 645v2M640.5 647v2M639.5 649v3M638.5 652v2M637.5 654v2M636.5 656v2M635.5 658v2M634.5 660v2M633.5 662v3M632.5 665v2M631.5 667v2M630.5 669v2M629.5 671v2M628.5 673v2M627.5 675v2M626.5 677v2M670.5 584v2M669.5 586v2M668.5 588v2M667.5 590v2M666.5 592v1M662.5 584v1M663.5 585v2M664.5 587v2M665.5 589v2M666.5 591v2M666.5 592v1M667.5 593v2M668.5 595v1M669.5 596v2M670.5 598v1M671.5 599v1M672.5 600v2M673.5 602v1M674.5 603v2M675.5 605v1M676.5 606v2M677.5 608v1M678.5 609v1M679.5 610v2M680.5 612v1M681.5 613v2M682.5 615v1M683.5 616v2M684.5 618v1M685.5 619v2M686.5 621v1M687.5 622v1M688.5 623v2M689.5 625v1M690.5 626v2M691.5 628v1M692.5 629v2M693.5 631v1M694.5 632v1M695.5 633v2M696.5 635v1M697.5 636v2M698.5 638v1M698.5 638v2M699.5 640v4M700.5 644v3M701.5 647v3M702.5 650v4M703.5 654v3M704.5 657v4M705.5 661v3M706.5 664v4M707.5 668v3M708.5 671v3M709.5 674v4M710.5 678v3M711.5 681v4M712.5 685v3M713.5 688v3M714.5 691v4M715.5 695v3M716.5 698v4M717.5 702v3M718.5 705v4M719.5 709v3M720.5 712v3M721.5 715v4M722.5 719v2M722.5 720v1M723.5 721v2M724.5 723v1M725.5 724v2M726.5 726v1M727.5 727v2M728.5 729v1M729.5 730v2M730.5 732v1M731.5 733v2M732.5 735v1M733.5 736v2M734.5 738v1M735.5 739v2M736.5 741v1M737.5 742v2M738.5 744v1M738 744.5h1M739 745.5h2M741 746.5h2M743 747.5h2M745 748.5h2M747 749.5h2M749 750.5h2M751 751.5h2M753 752.5h2M755 753.5h2M757 754.5h2M759 755.5h2M761 756.5h2M786.5 636v3M785.5 639v5M784.5 644v5M783.5 649v5M782.5 654v5M781.5 659v5M780.5 664v5M779.5 669v5M778.5 674v5M777.5 679v5M776.5 684v5M775.5 689v5M774.5 694v5M773.5 699v5M772.5 704v5M771.5 709v5M770.5 714v5M769.5 719v5M768.5 724v5M767.5 729v5M766.5 734v5M765.5 739v5M764.5 744v5M763.5 749v5M762.5 754v3M786 636.5h1M787 635.5h1M788 634.5h1M789 633.5h1M790 632.5h1M791 631.5h1M792 630.5h1M793 629.5h1M794 628.5h1M795 627.5h1M796 626.5h1M797 625.5h1M798 624.5h1M799 623.5h1M800 622.5h1M801 621.5h1M802 620.5h1M803 619.5h1M804 618.5h1M805 617.5h2M807 616.5h1M808 615.5h1M809 614.5h1M810 613.5h1M811 612.5h1M812 611.5h1M813 610.5h1M814 609.5h1M815 608.5h1M816 607.5h1M817 606.5h1M818 605.5h1M819 604.5h1M820 603.5h1M821 602.5h1M822 601.5h1M823 600.5h1M824 599.5h1M825 598.5h1M826 597.5h1M826 597.5h5M831 596.5h4M836.5 588v3M835.5 591v4M834.5 595v2M990.5 566v3M991.5 569v5M992.5 574v5M993.5 579v6M994.5 585v5M995.5 590v3M995.5 592v3M996.5 595v5M997.5 600v6M998.5 606v5M999.5 611v5M1000.5 616v5M1001.5 621v6M1002.5 627v5M1003.5 632v5M1004.5 637v5M1005.5 642v6M1006.5 648v5M1007.5 653v5M1008.5 658v5M1009.5 663v6M1010.5 669v5M1011.5 674v5M1012.5 679v5M1013.5 684v6M1014.5 690v5M1015.5 695v5M1016.5 700v6M1017.5 706v5M1018.5 711v5M1019.5 716v5M1020.5 721v6M1021.5 727v5M1022.5 732v5M1023.5 737v5M1024.5 742v6M1025.5 748v5M1026.5 753v5M1027.5 758v5M1028.5 763v6M1029.5 769v5M1030.5 774v5M1031.5 779v5M1032.5 784v6M1033.5 790v5M1034.5 795v3M1106.5 554v2M1105.5 556v4M1104.5 560v3M1103.5 563v3M1102.5 566v4M1101.5 570v3M1100.5 573v3M1099.5 576v4M1098.5 580v3M1097.5 583v4M1096.5 587v3M1095.5 590v3M1094.5 593v4M1093.5 597v3M1092.5 600v3M1091.5 603v4M1090.5 607v3M1089.5 610v4M1088.5 614v3M1087.5 617v3M1086.5 620v4M1085.5 624v3M1084.5 627v3M1083.5 630v4M1082.5 634v3M1081.5 637v4M1080.5 641v3M1079.5 644v3M1078.5 647v4M1077.5 651v3M1076.5 654v3M1075.5 657v4M1074.5 661v3M1073.5 664v4M1072.5 668v3M1071.5 671v3M1070.5 674v4M1069.5 678v3M1068.5 681v3M1067.5 684v4M1066.5 688v3M1065.5 691v4M1064.5 695v3M1063.5 698v3M1062.5 701v4M1061.5 705v3M1060.5 708v3M1059.5 711v4M1058.5 715v3M1057.5 718v4M1056.5 722v3M1055.5 725v3M1054.5 728v4M1053.5 732v3M1052.5 735v3M1051.5 738v4M1050.5 742v3M1049.5 745v4M1048.5 749v3M1047.5 752v3M1046.5 755v4M1045.5 759v3M1044.5 762v3M1043.5 765v4M1042.5 769v3M1041.5 772v4M1040.5 776v3M1039.5 779v3M1038.5 782v4M1037.5 786v3M1036.5 789v3M1035.5 792v4M1034.5 796v2M1122.5 524v1M1121.5 525v2M1120.5 527v2M1119.5 529v2M1118.5 531v2M1117.5 533v2M1116.5 535v2M1115.5 537v2M1114.5 539v1M1113.5 540v2M1112.5 542v2M1111.5 544v2M1110.5 546v2M1109.5 548v2M1108.5 550v2M1107.5 552v2M1106.5 554v1M1122.5 524v5M1123.5 529v9M1124.5 538v9M1125.5 547v9M1126.5 556v9M1127.5 565v9M1128.5 574v9M1129.5 583v9M1130.5 592v10M1131.5 602v9M1132.5 611v9M1133.5 620v9M1134.5 629v9M1135.5 638v9M1136.5 647v9M1137.5 656v9M1138.5 665v9M1139.5 674v9M1140.5 683v9M1141.5 692v9M1142.5 701v9M1143.5 710v9M1144.5 719v9M1145.5 728v9M1146.5 737v10M1147.5 747v9M1148.5 756v9M1149.5 765v9M1150.5 774v9M1151.5 783v9M1152.5 792v9M1153.5 801v9M1154.5 810v5M990 388.5h1M991 389.5h1M992 390.5h1M993 391.5h2M995 392.5h1M996 393.5h1M997 394.5h1M998 395.5h1M999 396.5h1M1000 397.5h2M1002 398.5h1M1003 399.5h1M1004 400.5h1M1004 400.5h1M1005 401.5h1M1006 402.5h2M1008 403.5h1M1009 404.5h1M1010 405.5h1M1011 406.5h2M1013 407.5h1M1014 408.5h1M1015 409.5h2M1017 410.5h1M1018 411.5h1M1019 412.5h1M1020 413.5h2M1022 414.5h1M1023 415.5h1M1024 416.5h1M1025 417.5h2M1027 418.5h1M1028 419.5h1M1029 420.5h2M1031 421.5h1M1032 422.5h1M1033 423.5h1M1034 424.5h2M1036 425.5h1M1037 426.5h1M1038 427.5h1M1039 428.5h2M1041 429.5h1M1042 430.5h1M1043 431.5h2M1045 432.5h1M1046 433.5h1M1047 434.5h1M1048 435.5h2M1050 436.5h1M1051 437.5h1M1052 438.5h1M1053 439.5h2M1055 440.5h1M1056 441.5h1M1057 442.5h2M1059 443.5h1M1060 444.5h1M1061 445.5h1M1062 446.5h2M1064 447.5h1M1065 448.5h1M1066 449.5h1M1067 450.5h2M1069 451.5h1M1070 452.5h1M1071 453.5h2M1073 454.5h1M1074 455.5h1M1090.5 435v1M1089.5 436v1M1088.5 437v2M1087.5 439v1M1086.5 440v1M1085.5 441v1M1084.5 442v2M1083.5 444v1M1082.5 445v1M1081.5 446v1M1080.5 447v2M1079.5 449v1M1078.5 450v1M1077.5 451v1M1076.5 452v2M1075.5 454v1M1074.5 455v1M1090 435.5h3M1093 434.5h4M1097 433.5h4M1101 432.5h4M1105 431.5h2M1106 431.5h5M1111 430.5h8M1119 429.5h8M1127 428.5h4M1130.5 428v2M1131.5 430v4M1132.5 434v4M1133.5 438v3M1134.5 441v4M1135.5 445v4M1136.5 449v3M1137.5 452v4M1138.5 456v4M1139.5 460v3M1140.5 463v4M1141.5 467v4M1142.5 471v4M1143.5 475v3M1144.5 478v4M1145.5 482v4M1146.5 486v3M1147.5 489v4M1148.5 493v4M1149.5 497v3M1150.5 500v4M1151.5 504v4M1152.5 508v3M1153.5 511v4M1154.5 515v4M1155.5 519v3M1156.5 522v4M1157.5 526v4M1158.5 530v3M1159.5 533v4M1160.5 537v4M1161.5 541v4M1162.5 545v3M1163.5 548v4M1164.5 552v4M1165.5 556v3M1166.5 559v4M1167.5 563v4M1168.5 567v3M1169.5 570v4M1170.5 574v4M1171.5 578v3M1172.5 581v4M1173.5 585v4M1174.5 589v3M1175.5 592v4M1176.5 596v4M1177.5 600v3M1178.5 603v4M1179.5 607v4M1180.5 611v4M1181.5 615v3M1182.5 618v4M1183.5 622v4M1184.5 626v3M1185.5 629v4M1186.5 633v4M1187.5 637v2" fill="none" stroke="#8a3030" stroke-width="1" shape-rendering="crispEdges"/><circle cx="2.5" cy="169" r="1.9" fill="#ffe84a" opacity="0.62"/><circle cx="26.5" cy="205" r="1.9" fill="#ffe84a" opacity="0.62"/><circle cx="42.5" cy="210" r="1.9" fill="#ffe84a" opacity="0.62"/><circle cx="130.5" cy="398" r="1.9" fill="#ffe84a" opacity="0.62"/><circle cx="186.5" cy="489" r="1.9" fill="#ffe84a" opacity="0.62"/><circle cx="18.5" cy="282" r="1.9" fill="#ffe84a" opacity="0.62"/><circle cx="34.5" cy="288" r="1.9" fill="#ffe84a" opacity="0.62"/><circle cx="58.5" cy="542" r="1.9" fill="#ffe84a" opacity="0.62"/><circle cx="82.5" cy="593" r="1.9" fill="#ffe84a" opacity="0.62"/><circle cx="98.5" cy="620" r="1.9" fill="#ffe84a" opacity="0.62"/><circle cx="146.5" cy="752" r="1.9" fill="#ffe84a" opacity="0.62"/><circle cx="170.5" cy="668" r="1.9" fill="#ffe84a" opacity="0.62"/><circle cx="162.5" cy="607" r="1.9" fill="#ffe84a" opacity="0.62"/><circle cx="210.5" cy="670.5" r="1.9" fill="#ffe84a" opacity="0.62"/><circle cx="282.5" cy="702.5" r="1.9" fill="#ffe84a" opacity="0.62"/><circle cx="338.5" cy="730" r="1.9" fill="#ffe84a" opacity="0.62"/><circle cx="434.5" cy="167" r="1.9" fill="#ffe84a" opacity="0.62"/><circle cx="458.5" cy="80.3" r="1.9" fill="#ffe84a" opacity="0.62"/><circle cx="482.5" cy="43.4" r="1.9" fill="#ffe84a" opacity="0.62"/><circle cx="562.5" cy="657" r="1.9" fill="#ffe84a" opacity="0.62"/><circle cx="626.5" cy="678.5" r="1.9" fill="#ffe84a" opacity="0.62"/><circle cx="698.5" cy="638.7" r="1.9" fill="#ffe84a" opacity="0.62"/><circle cx="722.5" cy="721" r="1.9" fill="#ffe84a" opacity="0.62"/><circle cx="738.5" cy="745" r="1.9" fill="#ffe84a" opacity="0.62"/><circle cx="762.5" cy="756" r="1.9" fill="#ffe84a" opacity="0.62"/><circle cx="786.5" cy="637" r="1.9" fill="#ffe84a" opacity="0.62"/><circle cx="826.5" cy="597.6" r="1.9" fill="#ffe84a" opacity="0.62"/><circle cx="834.5" cy="597" r="1.9" fill="#ffe84a" opacity="0.62"/><circle cx="1034.5" cy="798" r="1.9" fill="#ffe84a" opacity="0.62"/><circle cx="1106.5" cy="555" r="1.9" fill="#ffe84a" opacity="0.62"/><circle cx="1122.5" cy="524.6" r="1.9" fill="#ffe84a" opacity="0.62"/><circle cx="1154.5" cy="814" r="1.9" fill="#ffe84a" opacity="0.62"/><circle cx="1074.5" cy="455.4" r="1.9" fill="#ffe84a" opacity="0.62"/><circle cx="1090.5" cy="435.5" r="1.9" fill="#ffe84a" opacity="0.62"/><circle cx="1130.5" cy="428" r="1.9" fill="#ffe84a" opacity="0.62"/></svg>
<div class="ct" style="left:6px;top:5px;letter-spacing:0;transform:scaleX(0.925);transform-origin:0 0">EURUSD,H4</div><div class="ct" style="left:79px;top:5px;letter-spacing:0.37px">1.21609 1.21769 1.21602 1.21700</div>
<div class="pl" style="top:25px">1.20145</div><div class="pl" style="top:75px">1.19965</div><div class="pl" style="top:124px">1.19790</div><div class="pl" style="top:173px">1.19610</div><div class="pl" style="top:222px">1.19435</div><div class="pl" style="top:271px">1.19255</div><div class="pl" style="top:320px">1.19080</div><div class="pl" style="top:369px">1.18900</div><div class="pl" style="top:418px">1.18725</div><div class="pl" style="top:467px">1.18545</div><div class="pl" style="top:516px">1.18370</div><div class="pl" style="top:565px">1.18190</div><div class="pl" style="top:614px">1.18015</div><div class="pl" style="top:663px">1.17835</div><div class="pl" style="top:712px">1.17660</div><div class="pl" style="top:761px">1.17480</div><div class="pl" style="top:811px">1.17300</div><div class="yb" style="top:118px"><span>1.19805</span></div><div class="yb" style="top:276px"><span>1.19235</span></div><div class="dl" style="left:1px">18 Aug 2020</div><div class="dl" style="left:97px">20 Aug 16:00</div><div class="dl" style="left:193px">24 Aug 16:00</div><div class="dl" style="left:289px">26 Aug 16:00</div><div class="dl" style="left:385px">28 Aug 16:00</div><div class="dl" style="left:481px">1 Sep 16:00</div><div class="dl" style="left:577px">3 Sep 16:00</div><div class="dl" style="left:673px">7 Sep 16:00</div><div class="dl" style="left:769px">9 Sep 16:00</div><div class="dl" style="left:865px">11 Sep 16:00</div><div class="dl" style="left:961px">15 Sep 16:00</div><div class="dl" style="left:1057px">17 Sep 16:00</div><div class="dl" style="left:1153px">21 Sep 16:00</div>
<div class="wm">© ForexMT4Indicators.com</div>
<div class="cjk">指标铺</div>
<div class="dlg">
 <div class="tb"></div>
 <div class="tt">Custom Indicator - mslmsh</div>
 <div class="q">?</div>
 <svg class="x" width="13" height="13" viewBox="0 0 13 13"><path d="M0.5 0.5 L12 12 M12 0.5 L0.5 12" stroke="#8f8f8f" stroke-width="1" fill="none"/></svg>
 <div class="tab" style="left:10px;width:48px">About</div>
 <div class="tab" style="left:57px;width:66px">Common</div>
 <div class="tab sel" style="left:122px;width:52px">Inputs</div>
 <div class="tab" style="left:173px;width:50px">Colors</div>
 <div class="tab" style="left:222px;width:86px">Visualization</div>
 <div class="page">
  <div class="list">
   <div class="hd" style="left:7px">Variable</div>
   <div class="hd" style="left:312px">Value</div>
   <div class="row" style="top:25px"><svg class="ico" style="top:1px" width="23" height="22" viewBox="0 0 22 21"><defs><linearGradient id="g1" x1="0" y1="0" x2="0" y2="1"><stop offset="0" stop-color="#cfe6fa"/><stop offset="1" stop-color="#5e9fdc"/></linearGradient></defs><path d="M1.5 1.5 H15 L20.5 6.5 V18 L17 19.5 L14 18 L11 19.5 L8 18 L5 19.5 L1.5 18 Z" fill="url(#g1)" stroke="#6fa3d8" stroke-width="1"/><path d="M15 1.5 V6.5 H20.5" fill="#e9f3fc" stroke="#6fa3d8" stroke-width="1"/><text x="10.5" y="14.5" font-family="Liberation Sans, sans-serif" font-size="8.5" font-weight="bold" fill="#0c2d6b" text-anchor="middle">123</text></svg><span style="position:absolute;left:28px">PipRange</span><span style="position:absolute;left:310px">5</span></div>
   <div class="row sel" style="top:49px"><svg class="ico" style="top:1px" width="23" height="22" viewBox="0 0 22 21"><path d="M1.5 1.5 H15 L20.5 6.5 V18 L17 19.5 L14 18 L11 19.5 L8 18 L5 19.5 L1.5 18 Z" fill="url(#g1)" stroke="#6fa3d8" stroke-width="1"/><path d="M15 1.5 V6.5 H20.5" fill="#e9f3fc" stroke="#6fa3d8" stroke-width="1"/><text x="10.5" y="14.5" font-family="Liberation Sans, sans-serif" font-size="8.5" font-weight="bold" fill="#0c2d6b" text-anchor="middle">123</text></svg><span style="position:absolute;left:28px">Porcent</span><span style="position:absolute;left:310px">20</span></div>
   <div class="vd"></div><div class="vd2"></div>
  </div>
  <div class="btn" style="left:637px;top:226px;width:136px">Load</div>
  <div class="btn" style="left:637px;top:266px;width:136px">Save</div>
 </div>
 <div class="btn" style="left:477px;top:381px;width:96px">OK</div>
 <div class="btn" style="left:585px;top:381px;width:96px">Cancel</div>
 <div class="btn" style="left:693px;top:381px;width:96px">Reset</div>
 <svg style="position:absolute;left:791px;top:409px" width="9" height="9" viewBox="0 0 9 9"><g fill="#bdbdbd"><rect x="1" y="1" width="3" height="3"/><rect x="5" y="1" width="3" height="3"/><rect x="1" y="5" width="3" height="3"/><rect x="5" y="5" width="3" height="3"/></g></svg>
</div>
</body></html>
